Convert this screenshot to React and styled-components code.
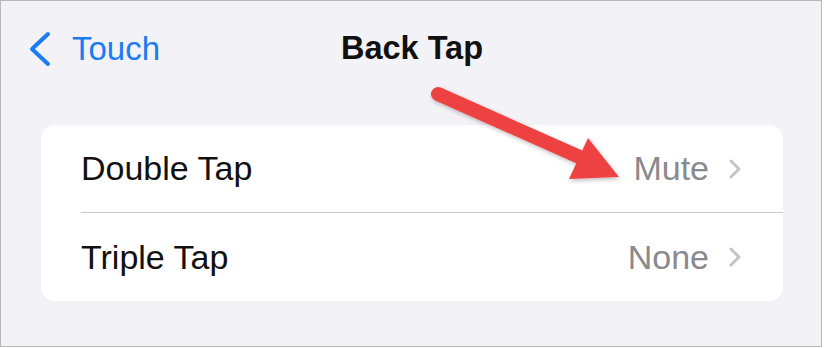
import React from 'react'
import styled, { createGlobalStyle } from 'styled-components'

const bg = '#f2f2f7'
const blue = '#1b7cf2'
const grey = '#8a8a8e'
const lightGrey = '#c4c4c7'
const divider = '#c9c9cd'
const red = '#ee4343'

const GlobalStyle = createGlobalStyle`
    html, body {
        margin: 0;
        padding: 0;
        background: #ffffff;
    }
    body {
        font-family: "Liberation Sans", Arial, sans-serif;
        -webkit-font-smoothing: antialiased;
    }
`

const Frame = styled.div`
    position: relative;
    box-sizing: border-box;
    width: 822px;
    height: 347px;
    border: 1px solid #b8b8bc;
    background: ${bg};
    overflow: hidden;
`

const NavBar = styled.div`
    display: grid;
    grid-template-columns: 1fr auto 1fr;
    align-items: center;
    height: 94px;
    padding: 0 26px;
    box-sizing: border-box;
`

const BackButton = styled.div`
    display: flex;
    align-items: center;
    gap: 19px;
    color: ${blue};
    font-size: 33px;
    margin-top: 1px;
`

const Title = styled.div`
    font-size: 32.5px;
    font-weight: 700;
    color: #111;
    padding-left: 2px;
`

const Card = styled.div`
    margin: 30px 38px 0 40px;
    background: #ffffff;
    border-radius: 14px;
    overflow: hidden;
`

const Row = styled.div`
    display: flex;
    align-items: center;
    height: ${({ $height }) => $height}px;
    margin-left: 40px;
    padding-right: 41px;
    border-top: ${({ $divided }) => ($divided ? `1px solid ${divider}` : 'none')};
`

const Label = styled.div`
    flex: 1;
    font-size: 34px;
    color: #111;
`

const Value = styled.div`
    font-size: 34px;
    color: ${grey};
    margin-right: 19px;
`

const Arrow = styled.svg`
    position: absolute;
    left: 0;
    top: 0;
    pointer-events: none;
`

const BackChevron = () => (
    <svg width="26" height="36" viewBox="0 0 26 36">
        <path d="M21 3 L5 18 L21 33" fill="none" stroke={blue} strokeWidth="4" strokeLinecap="round" strokeLinejoin="round" />
    </svg>
)

const Chevron = () => (
    <svg width="14" height="22" viewBox="0 0 14 22">
        <path d="M3 3 L11 11 L3 19" fill="none" stroke={lightGrey} strokeWidth="3" strokeLinecap="round" strokeLinejoin="round" />
    </svg>
)

const rows = [
    { label: 'Double Tap', value: 'Mute', height: 87 },
    { label: 'Triple Tap', value: 'None', height: 88 },
]

export default function App() {
    return (
        <>
            <GlobalStyle />
            <Frame>
                <NavBar>
                    <BackButton>
                        <BackChevron />
                        <span>Touch</span>
                    </BackButton>
                    <Title>Back Tap</Title>
                    <div />
                </NavBar>
                <Card>
                    {rows.map((row, i) => (
                        <Row key={row.label} $height={row.height} $divided={i > 0}>
                            <Label>{row.label}</Label>
                            <Value>{row.value}</Value>
                            <Chevron />
                        </Row>
                    ))}
                </Card>
                <Arrow width="822" height="347" viewBox="0 0 822 347">
                    <defs>
                        <filter id="shadow" x="-20%" y="-20%" width="140%" height="140%">
                            <feDropShadow dx="1" dy="2" stdDeviation="2" floodColor="#000" floodOpacity="0.25" />
                        </filter>
                    </defs>
                    <g filter="url(#shadow)" fill={red}>
                        <path d="M437 93 L583 158" stroke={red} strokeWidth="14" strokeLinecap="round" />
                        <polygon points="587,137 568,178 618,176" />
                    </g>
                </Arrow>
            </Frame>
        </>
    )
}
